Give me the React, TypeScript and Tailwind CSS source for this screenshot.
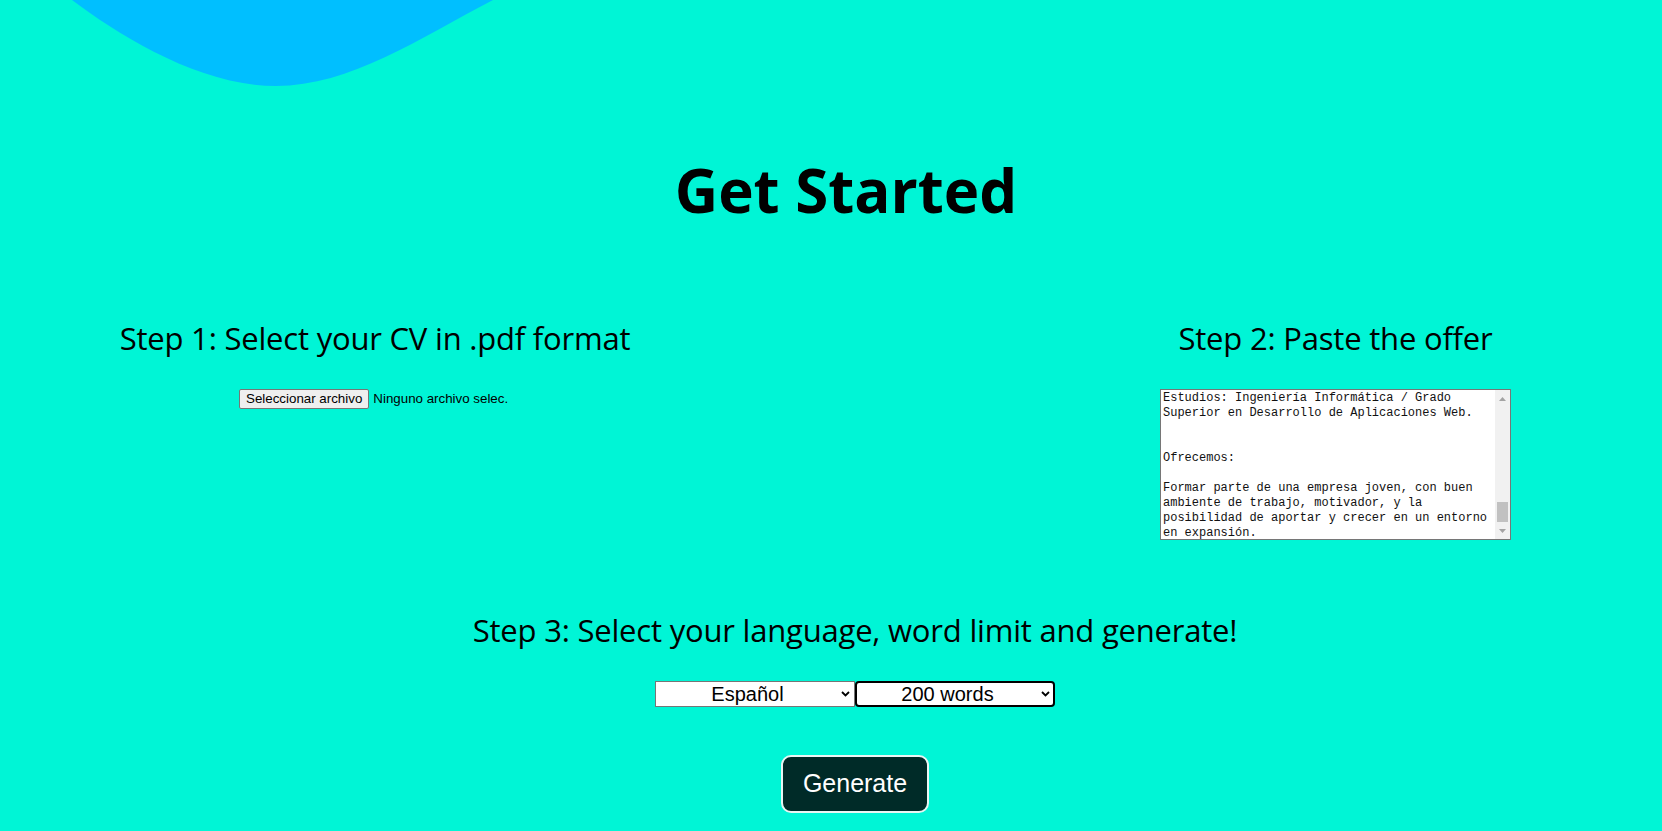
const OFFER_LINES = [
  'Estudios: Ingeniería Informática / Grado',
  'Superior en Desarrollo de Aplicaciones Web.',
  '',
  '',
  'Ofrecemos:',
  '',
  'Formar parte de una empresa joven, con buen',
  'ambiente de trabajo, motivador, y la',
  'posibilidad de aportar y crecer en un entorno',
  'en expansión.',
];

function Chevron() {
  return (
    <svg width="9" height="6" viewBox="0 0 9 6" className="shrink-0 ml-[4px] mr-[3px]">
      <path d="M1 1 L4.5 4.5 L8 1" fill="none" stroke="#000" strokeWidth="1.8" />
    </svg>
  );
}

function FakeSelect({ label, focused }: { label: string; focused?: boolean }) {
  return (
    <div
      className={
        focused
          ? 'w-[200px] h-[26px] bg-white border-2 border-black rounded-[4px] flex items-center pl-[1px]'
          : 'w-[200px] h-[26px] bg-white border border-[#767676] flex items-center pl-[2px] pr-[1px]'
      }
    >
      <span className="flex-1 text-center text-[20px] leading-none text-black">{label}</span>
      <Chevron />
    </div>
  );
}

export default function App() {
  return (
    <div
      className="relative h-[831px] overflow-hidden bg-[#00f5d6] text-black"
      style={{ fontFamily: '"Open Sans", sans-serif' }}
    >
      <svg className="absolute top-0 left-0" width="520" height="95" viewBox="0 0 520 95">
        <path d="M72 0 C120 36, 200 86, 276 86 C350 86, 420 38, 493 0 Z" fill="#00bfff" />
      </svg>

      <h1 className="relative pl-[30px] mt-0 pt-[160px] text-center text-[60px] leading-[60px] font-bold">
        Get Started
      </h1>

      <div className="flex justify-between pl-[120px] pr-[151px] mt-[102px]">
        <div className="w-[510px] flex flex-col items-center">
          <h2 className="text-[31px] leading-[32px] tracking-[-0.2px] whitespace-nowrap">
            Step 1: Select your CV in .pdf format
          </h2>
          <div
            className="self-start ml-[119px] mt-[35px] flex items-center text-[13.33px]"
            style={{ fontFamily: '"Liberation Sans", Arial, sans-serif' }}
          >
            <button className="h-[20px] px-[6px] bg-[#efefef] border border-[#767676] rounded-[2px] leading-none">
              Seleccionar archivo
            </button>
            <span className="ml-[4px]">Ninguno archivo selec.</span>
          </div>
        </div>

        <div className="w-[351px] flex flex-col items-center">
          <h2 className="text-[31px] leading-[32px] tracking-[-0.2px] whitespace-nowrap">Step 2: Paste the offer</h2>
          <div className="mt-[35px] w-[351px] h-[151px] bg-white border border-[#767676] flex overflow-hidden">
            <div
              className="flex-1 pl-[2px] pt-[1px] text-[12px] leading-[15px] text-[#111] whitespace-pre overflow-hidden"
              style={{ fontFamily: '"Liberation Mono", monospace' }}
            >
              {OFFER_LINES.map((line, i) => (
                <div key={i} className="h-[15px]">
                  {line}
                </div>
              ))}
            </div>
            <div className="w-[15px] bg-[#f1f1f1] flex flex-col items-center">
              <div className="h-[17px] flex items-center justify-center">
                <svg width="7" height="4" viewBox="0 0 7 4">
                  <path d="M0 4 L3.5 0 L7 4 Z" fill="#a3a3a3" />
                </svg>
              </div>
              <div className="flex-1 w-full flex flex-col justify-end px-[2px]">
                <div className="h-[20px] bg-[#c1c1c1]" />
              </div>
              <div className="h-[17px] flex items-center justify-center">
                <svg width="7" height="4" viewBox="0 0 7 4">
                  <path d="M0 0 L3.5 4 L7 0 Z" fill="#a3a3a3" />
                </svg>
              </div>
            </div>
          </div>
        </div>
      </div>

      <div className="pl-[48px] flex flex-col items-center">
        <h2 className="mt-[74px] text-[31px] leading-[32px] tracking-[-0.2px] whitespace-nowrap">
          Step 3: Select your language, word limit and generate!
        </h2>
        <div className="mt-[35px] flex" style={{ fontFamily: '"Liberation Sans", Arial, sans-serif' }}>
          <FakeSelect label="Español" />
          <FakeSelect label="200 words" focused />
        </div>
        <button
          className="mt-[48px] w-[148px] h-[58px] bg-[#002b28] border-2 border-[#e8f5f3] rounded-[10px] text-white text-[25px]"
          style={{ fontFamily: '"Liberation Sans", Arial, sans-serif' }}
        >
          Generate
        </button>
      </div>
    </div>
  );
}
